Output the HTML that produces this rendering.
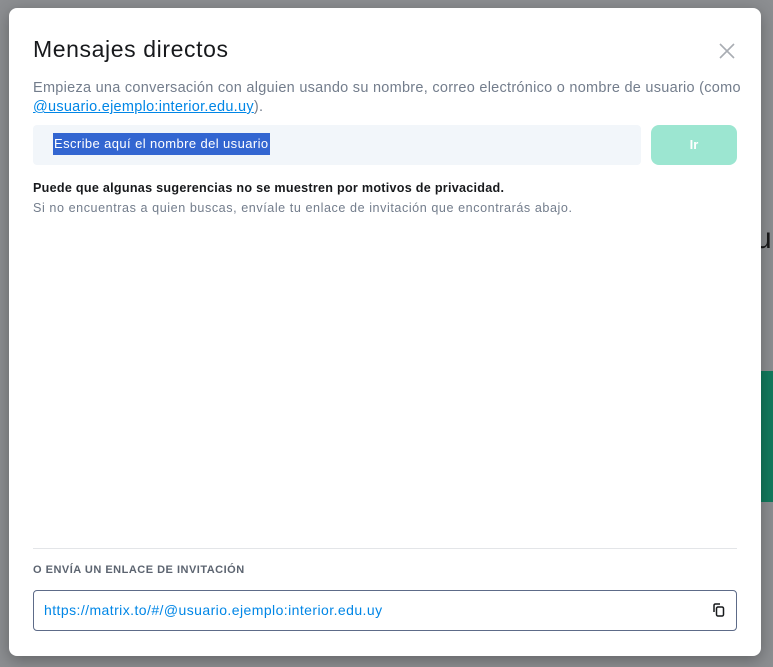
<!DOCTYPE html>
<html><head><meta charset="utf-8"><style>
html,body{margin:0;padding:0;width:773px;height:667px;overflow:hidden;background:#8c8e91;font-family:"Liberation Sans",sans-serif;}
.bgu{position:absolute;left:755px;top:222px;font-size:30px;color:#1a1a1a;}
.green{position:absolute;left:755px;top:371px;width:18px;height:131px;background:#127a5d;}
.dlg{position:absolute;left:9px;top:8px;width:752px;height:648px;background:#fff;border-radius:8px;box-shadow:0 4px 16px rgba(0,0,0,.3);}
.t{position:absolute;left:24px;top:28px;font-size:23px;color:#17191c;letter-spacing:0.6px;}
.x{position:absolute;left:710px;top:35px;}
.d{position:absolute;left:24px;top:71px;width:720px;font-size:14.5px;line-height:19px;color:#737d8c;letter-spacing:0.27px;}
.d a{color:#0086e6;text-decoration:underline;}
.inp{position:absolute;left:24px;top:117px;width:608px;height:40px;background:#f2f6fa;border-radius:4px;}
.sel{position:absolute;left:20px;top:8px;height:22px;line-height:22px;background:#3366d1;color:#fff;font-size:13px;padding:0 1px;letter-spacing:0.4px;}
.btn{position:absolute;left:642px;top:117px;width:86px;height:40px;background:#9ce6d1;border-radius:8px;color:#fff;font-size:13px;font-weight:bold;text-align:center;line-height:40px;}
.p1{position:absolute;left:24px;top:173px;font-size:12.6px;font-weight:bold;color:#17191c;letter-spacing:0.27px;}
.p2{position:absolute;left:24px;top:193px;font-size:12.6px;color:#737d8c;letter-spacing:0.56px;}
.hr{position:absolute;left:24px;top:540px;width:704px;height:1px;background:#e3e5e8;}
.lbl{position:absolute;left:24px;top:556px;font-size:11px;font-weight:bold;color:#5c6470;letter-spacing:0.5px;}
.link{position:absolute;left:24px;top:582px;width:702px;height:39px;border:1px solid #5d6b88;border-radius:4px;}
.link span{position:absolute;left:10px;top:11px;font-size:14px;color:#0086e6;letter-spacing:0.43px;}
.cp{position:absolute;left:677px;top:11px;}
</style></head><body>
<div class="bgu">u</div>
<div class="green"></div>
<div class="dlg">
<div class="t">Mensajes directos</div>
<svg class="x" width="16" height="16" viewBox="0 0 16 16"><path d="M1 1L15 15M15 1L1 15" stroke="#a9adb3" stroke-width="1.6"/></svg>
<div class="d">Empieza una conversación con alguien usando su nombre, correo electrónico o nombre de usuario (como <a>@usuario.ejemplo:interior.edu.uy</a>).</div>
<div class="inp"><div class="sel">Escribe aquí el nombre del usuario</div></div>
<div class="btn">Ir</div>
<div class="p1">Puede que algunas sugerencias no se muestren por motivos de privacidad.</div>
<div class="p2">Si no encuentras a quien buscas, envíale tu enlace de invitación que encontrarás abajo.</div>
<div class="hr"></div>
<div class="lbl">O ENVÍA UN ENLACE DE INVITACIÓN</div>
<div class="link"><span>https://matrix.to/#/@usuario.ejemplo:interior.edu.uy</span>
<svg class="cp" width="16" height="16" viewBox="0 0 16 16" fill="none" stroke="#17191c" stroke-width="1.5"><path d="M3 10V3.5Q3 2 4.5 2H9"/><rect x="5.5" y="5" width="7" height="9" rx="1.5"/></svg></div>
</div>
</body></html>
